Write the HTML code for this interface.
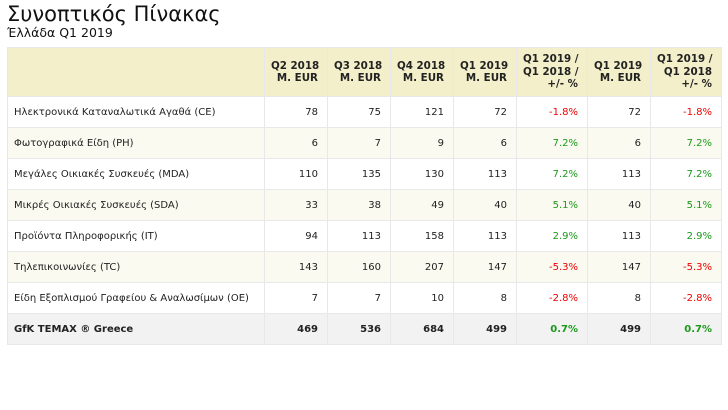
<!DOCTYPE html>
<html><head><meta charset="utf-8"><style>
body{margin:0;background:#fff;font-family:"DejaVu Sans","Liberation Sans",sans-serif;color:#222;width:728px;height:410px;overflow:hidden}
h1{position:absolute;left:7px;top:2px;margin:0;font-weight:normal;font-size:21px;color:#111}
.sub{position:absolute;left:7px;top:25px;font-size:12.5px;color:#111}
table{position:absolute;left:7px;top:47px;border-collapse:collapse;font-size:10px;table-layout:fixed;width:714px}
td,th{border:1px solid #e8e8e8;padding:0 9px 0 6px;text-align:right;white-space:nowrap}
th{background:#f3efca;height:48px;font-weight:bold;line-height:12.5px;color:#222;font-size:10.3px}
td{height:30px}
td:first-child{text-align:left}
tbody tr:nth-child(even) td{background:#fafaf0}
tr.t td{background:#f2f2f2 !important;font-weight:bold}
.r{color:#e00}.g{color:#1a9a1a}
</style></head><body>
<h1>Συνοπτικός Πίνακας</h1>
<div class="sub">Έλλάδα Q1 2019</div>
<table>
<colgroup><col style="width:257px"><col style="width:63px"><col style="width:63px"><col style="width:63px"><col style="width:63px"><col style="width:71px"><col style="width:63px"><col style="width:71px"></colgroup>
<thead><tr><th></th><th>Q2 2018<br>M. EUR</th><th>Q3 2018<br>M. EUR</th><th>Q4 2018<br>M. EUR</th><th>Q1 2019<br>M. EUR</th><th>Q1 2019 /<br>Q1 2018 /<br>+/- %</th><th>Q1 2019<br>M. EUR</th><th>Q1 2019 /<br>Q1 2018<br>+/- %</th></tr></thead>
<tbody>
<tr><td>Ηλεκτρονικά Καταναλωτικά Αγαθά (CE)</td><td>78</td><td>75</td><td>121</td><td>72</td><td class="r">-1.8%</td><td>72</td><td class="r">-1.8%</td></tr>
<tr><td>Φωτογραφικά Είδη (PH)</td><td>6</td><td>7</td><td>9</td><td>6</td><td class="g">7.2%</td><td>6</td><td class="g">7.2%</td></tr>
<tr><td>Μεγάλες Οικιακές Συσκευές (MDA)</td><td>110</td><td>135</td><td>130</td><td>113</td><td class="g">7.2%</td><td>113</td><td class="g">7.2%</td></tr>
<tr><td>Μικρές Οικιακές Συσκευές (SDA)</td><td>33</td><td>38</td><td>49</td><td>40</td><td class="g">5.1%</td><td>40</td><td class="g">5.1%</td></tr>
<tr><td>Προϊόντα Πληροφορικής (IT)</td><td>94</td><td>113</td><td>158</td><td>113</td><td class="g">2.9%</td><td>113</td><td class="g">2.9%</td></tr>
<tr><td>Τηλεπικοινωνίες (TC)</td><td>143</td><td>160</td><td>207</td><td>147</td><td class="r">-5.3%</td><td>147</td><td class="r">-5.3%</td></tr>
<tr><td>Είδη Εξοπλισμού Γραφείου &amp; Αναλωσίμων (OE)</td><td>7</td><td>7</td><td>10</td><td>8</td><td class="r">-2.8%</td><td>8</td><td class="r">-2.8%</td></tr>
<tr class="t"><td>GfK TEMAX ® Greece</td><td>469</td><td>536</td><td>684</td><td>499</td><td class="g">0.7%</td><td>499</td><td class="g">0.7%</td></tr>
</tbody></table>
</body></html>
